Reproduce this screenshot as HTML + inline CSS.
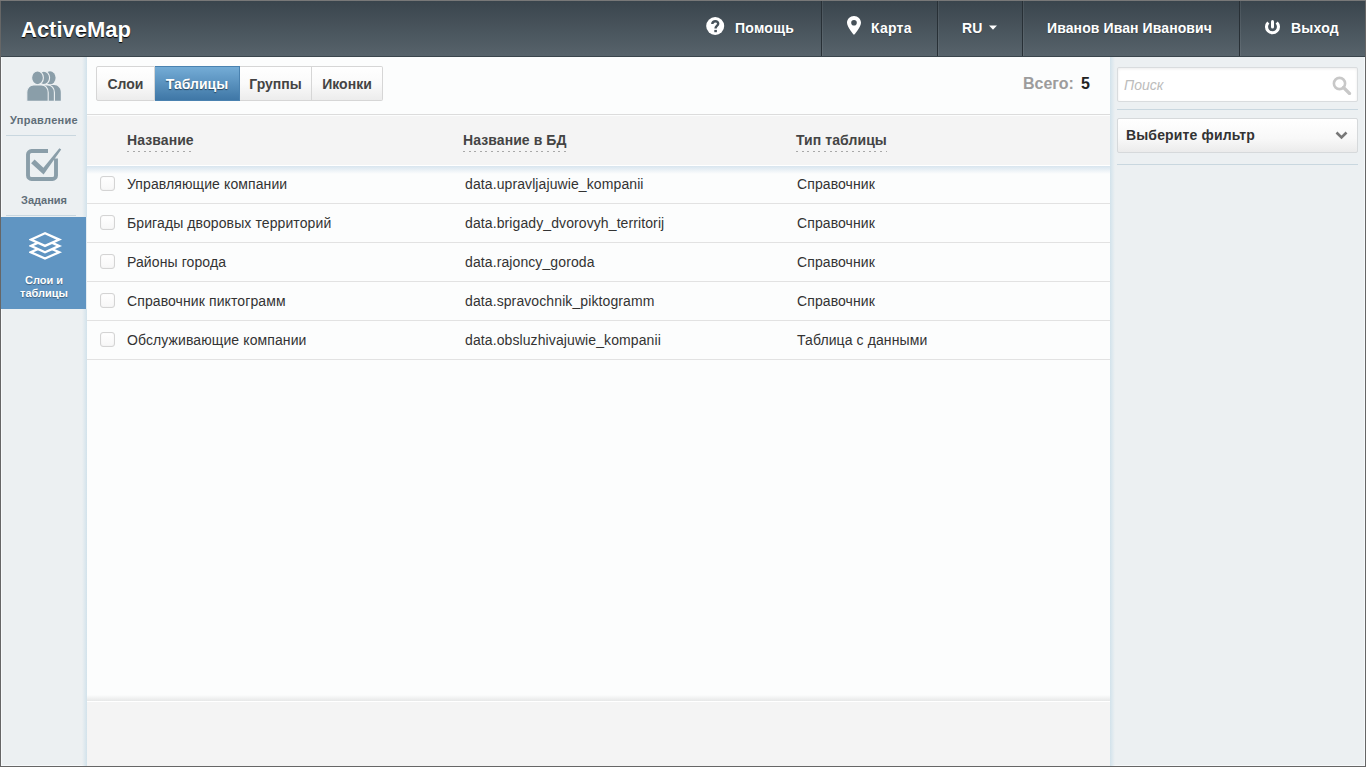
<!DOCTYPE html>
<html><head><meta charset="utf-8">
<style>
*{box-sizing:border-box;margin:0;padding:0}
html,body{width:1366px;height:767px;overflow:hidden;background:#666}
body{font-family:"Liberation Sans",sans-serif;color:#333;position:relative}
.abs{position:absolute}
#top{left:0;top:0;width:1366px;height:1px;background:#787878}
.frame{position:absolute;left:1px;top:1px;width:1364px;height:765px;background:#fcfdfd;overflow:hidden}
.hdr{position:absolute;left:0;top:0;width:1364px;height:56px;background:linear-gradient(#3a454d,#57636b);border-bottom:1px solid #3a454c}
.logo{position:absolute;left:20px;top:16px;font-size:22px;font-weight:bold;color:#fff;text-shadow:0 1px 1px #000;letter-spacing:0}
.nav{position:absolute;top:19px;font-size:14px;font-weight:bold;color:#fff;line-height:16px;text-shadow:0 1px 1px rgba(0,0,0,.25);white-space:nowrap;letter-spacing:0.25px}
.sep{position:absolute;top:0;width:2px;height:55px;background:linear-gradient(90deg,#283036 50%,rgba(255,255,255,.07) 50%)}
.side{position:absolute;left:0;top:56px;width:86px;height:709px;background:#ecf0f2;box-shadow:inset 1px 0 #f6f9fb,inset 0 -1px #f6f9fb}
.side:after{content:"";position:absolute;right:0;top:0;width:5px;height:100%;background:linear-gradient(90deg,rgba(212,227,236,0),#d2e2eb);z-index:0}
.right{position:absolute;left:1109px;top:56px;width:255px;height:709px;background:#ecf0f2;box-shadow:inset -1px 0 #f6f9fb,inset 0 -1px #f6f9fb}
.right:before{content:"";position:absolute;left:0;top:0;width:5px;height:100%;background:linear-gradient(90deg,#d2e2eb,rgba(212,227,236,0))}
.sitem{position:absolute;left:0;width:86px;text-align:center;font-size:11px;font-weight:bold;color:#5f6e78;line-height:13px}
.ssep{position:absolute;left:5px;width:70px;height:1px;background:#c9d7df}
.active{position:absolute;left:0;top:160px;width:85px;height:92px;background:#6095c2;z-index:1;box-shadow:1px 0 0 #e3ecf2}
.side svg,.side .sitem{z-index:2}
.toolbar{position:absolute;left:86px;top:56px;width:1023px;height:58px;border-bottom:1px solid #dcdcdc;background:#fcfdfd}
.tabs{position:absolute;left:9px;top:9px;height:35px}
.tab{position:absolute;top:0;height:35px;border:1px solid #d6d6d6;border-left:none;background:linear-gradient(#fff 0%,#fafafa 50%,#ececec 100%);font-size:14px;font-weight:bold;color:#444;text-align:center;line-height:34px}
.tab.first{border-left:1px solid #d6d6d6;border-radius:2px 0 0 2px}
.tab.last{border-radius:0 2px 2px 0}
.tab.on{background:linear-gradient(#74acd6,#3f77a6);border-color:#4a82b0;color:#fff;text-shadow:0 1px 1px rgba(0,0,0,.5)}
.thead{position:absolute;left:86px;top:115px;width:1023px;height:50px;background:#f4f4f4;border-bottom:1px solid #fff}
.shadow{position:absolute;left:86px;top:165px;width:1023px;height:8px;background:linear-gradient(rgba(180,205,225,.5),rgba(180,205,225,0))}
.th{position:absolute;top:16px;font-size:14px;font-weight:bold;color:#444;line-height:16px;padding-bottom:4px;letter-spacing:0.08px;background:repeating-linear-gradient(90deg,#a8a8a8 0 2px,transparent 2px 5.6px) left bottom/100% 1px no-repeat}
.row{position:absolute;left:86px;width:1023px;height:39px;border-bottom:1px solid #e2e2e2}
.row span{position:absolute;top:11px;font-size:14px;color:#333;line-height:16px;white-space:nowrap;letter-spacing:0.1px}
.cb{position:absolute;left:13px;top:11px;width:15px;height:15px;border:1px solid #d4d4d4;border-radius:3px;background:linear-gradient(#fff,#f7f7f7);box-shadow:inset 0 0 1px #ddd}
.footer{position:absolute;left:86px;top:700px;width:1023px;height:65px;background:#f4f4f4;border-top:1px solid #fff}
.fshadow{position:absolute;left:86px;top:694px;width:1023px;height:6px;background:linear-gradient(rgba(231,232,232,0),#e7e8e8)}
</style></head><body>
<div class="abs" id="top"></div>
<div class="frame">
  <div class="hdr">
    <div class="logo">ActiveMap</div>
    <!-- help -->
    <svg class="abs" style="left:704px;top:16px" width="20" height="20" viewBox="-1.2 0 20 20"><circle cx="9" cy="9" r="9" fill="#fff"/><path d="M6.1 7.1C6.1 5.3 7.4 4.2 9.1 4.2 10.8 4.2 12 5.3 12 6.8 12 8.7 9.4 9 9.4 10.9V11.6" fill="none" stroke="#47525a" stroke-width="2.4"/><rect x="8.1" y="12.9" width="2.6" height="2.3" fill="#47525a"/></svg>
    <div class="nav" style="left:734px">Помощь</div>
    <div class="sep" style="left:820px"></div>
    <svg class="abs" style="left:846px;top:15.4px" width="14" height="19" viewBox="0 0 14 19"><path d="M7 0C3.1 0 0 3 0 6.8 0 11 7 19 7 19s7-8 7-12.2C14 3 10.9 0 7 0zm0 9.6a2.8 2.8 0 1 1 0-5.6 2.8 2.8 0 0 1 0 5.6z" fill="#fff"/></svg>
    <div class="nav" style="left:870px">Карта</div>
    <div class="sep" style="left:936px"></div>
    <div class="nav" style="left:961px">RU</div>
    <svg class="abs" style="left:988px;top:24px" width="8" height="5" viewBox="0 0 8 5"><path d="M0 .6h8L4 4.8z" fill="#fff"/></svg>
    <div class="sep" style="left:1021px"></div>
    <div class="nav" style="left:1046px;letter-spacing:0.1px">Иванов Иван Иванович</div>
    <div class="sep" style="left:1238px"></div>
    <svg class="abs" style="left:1262px;top:17px" width="19" height="18" viewBox="0 0 19 18"><path d="M5.3 4.5A6 6 0 1 0 13.7 4.5" fill="none" stroke="#fff" stroke-width="3.1"/><path d="M9.5 3.4V9.1" stroke="#fff" stroke-width="3" stroke-linecap="round"/></svg>
    <div class="nav" style="left:1290px">Выход</div>
  </div>

  <div class="side">
    <svg class="abs" style="left:25px;top:14px" width="37" height="32" viewBox="0 0 37 32">
      <g fill="#8a9ea9">
        <ellipse cx="24" cy="6.8" rx="5.6" ry="6.5"/>
        <path transform="translate(12.6 0)" d="M0.8 29.8V21.5C0.8 17.2 3.6 14 7.6 14H15.4C19.4 14 22.2 17.2 22.2 21.5V29.8Z"/>
      </g>
      <g fill="#8a9ea9" stroke="#ecf0f2" stroke-width="1.1">
        <ellipse cx="17.8" cy="6.8" rx="5.8" ry="6.7"/>
        <path transform="translate(6.2 0)" d="M0.8 30.4V21.5C0.8 17.2 3.6 14 7.6 14H15.4C19.4 14 22.2 17.2 22.2 21.5V30.4Z"/>
      </g>
      <g fill="#8a9ea9" stroke="#ecf0f2" stroke-width="1.1">
        <ellipse cx="11.5" cy="6.8" rx="5.9" ry="6.9"/>
        <path d="M0.8 30.4V21.5C0.8 17.2 3.6 14 7.6 14H15.4C19.4 14 22.2 17.2 22.2 21.5V30.4Z"/>
      </g>
    </svg>
    <div class="sitem" style="top:57px;letter-spacing:0.3px">Управление</div>
    <div class="ssep" style="top:78px"></div>
    <svg class="abs" style="left:25px;top:91px" width="36" height="36" viewBox="0 0 36 36">
      <path d="M22 3H5.5A3.5 3.5 0 0 0 2 6.5V27.5A3.5 3.5 0 0 0 5.5 31H26.5A3.5 3.5 0 0 0 30 27.5V10.5" fill="none" stroke="#8a9ea9" stroke-width="3.9"/>
      <path d="M5.1 15.2L8.6 11.6 17.4 19.8 33.4 0.3 35.2 1.4 17.6 26.6Z" fill="#8a9ea9"/>
    </svg>
    <div class="sitem" style="top:137px">Задания</div>
    <div class="ssep" style="top:158px"></div>
    <div class="active"></div>
    <svg class="abs" style="left:28px;top:175px" width="34" height="30" viewBox="0 0 34 30">
      <g stroke="#fff" stroke-width="2.3" fill="#6095c2" stroke-linejoin="miter">
        <path d="M16 13.9L1.8 20.2 16 26.5 30.2 20.2z"/>
        <path d="M16 7.6L1.8 13.9 16 20.2 30.2 13.9z"/>
        <path d="M16 1.3L1.8 7.6 16 13.9 30.2 7.6z"/>
      </g>
    </svg>
    <div class="sitem" style="top:217px;color:#fff;text-shadow:0 1px 1px rgba(0,0,0,.35)">Слои и<br>таблицы</div>
  </div>

  <div class="toolbar">
    <div class="tabs">
      <div class="tab first" style="left:0;width:59px">Слои</div>
      <div class="tab on" style="left:59px;width:85px">Таблицы</div>
      <div class="tab" style="left:144px;width:72px">Группы</div>
      <div class="tab last" style="left:216px;width:71px">Иконки</div>
    </div>
    <div class="abs" style="left:936px;top:18px;font-size:16px;font-weight:bold;color:#9c9c9c;line-height:18px">Всего:</div>
    <div class="abs" style="left:994px;top:18px;font-size:16px;font-weight:bold;color:#222;line-height:18px">5</div>
  </div>

  <div class="thead">
    <div class="th" style="left:40px">Название</div>
    <div class="th" style="left:376px">Название в БД</div>
    <div class="th" style="left:709px">Тип таблицы</div>
  </div>
  <div class="shadow"></div>

  <div class="row" style="top:164px"><div class="cb"></div><span style="left:40px">Управляющие компании</span><span style="left:378px">data.upravljajuwie_kompanii</span><span style="left:710px">Справочник</span></div>
  <div class="row" style="top:203px"><div class="cb"></div><span style="left:40px">Бригады дворовых территорий</span><span style="left:378px">data.brigady_dvorovyh_territorij</span><span style="left:710px">Справочник</span></div>
  <div class="row" style="top:242px"><div class="cb"></div><span style="left:40px">Районы города</span><span style="left:378px">data.rajoncy_goroda</span><span style="left:710px">Справочник</span></div>
  <div class="row" style="top:281px"><div class="cb"></div><span style="left:40px">Справочник пиктограмм</span><span style="left:378px">data.spravochnik_piktogramm</span><span style="left:710px">Справочник</span></div>
  <div class="row" style="top:320px"><div class="cb"></div><span style="left:40px">Обслуживающие компании</span><span style="left:378px">data.obsluzhivajuwie_kompanii</span><span style="left:710px">Таблица с данными</span></div>

  <div class="fshadow"></div>
  <div class="footer"></div>

  <div class="right">
    <div class="abs" style="left:7px;top:10px;width:241px;height:35px;border:1px solid #d9dcde;border-radius:2px;background:#fff;box-shadow:inset 0 1px 3px rgba(0,0,0,.08)"></div>
    <div class="abs" style="left:14px;top:20px;font-size:14px;font-style:italic;color:#bcbcbc;line-height:16px">Поиск</div>
    <svg class="abs" style="left:222.4px;top:18.6px" width="20" height="19" viewBox="0 0 20 19"><circle cx="7.5" cy="7.5" r="5.6" fill="none" stroke="#c8c8c8" stroke-width="2.6"/><path d="M11.5 11.5l6 6" stroke="#c8c8c8" stroke-width="3.2" stroke-linecap="round"/></svg>
    <div class="abs" style="left:7px;top:52px;width:241px;height:1px;background:#c9d7df"></div>
    <div class="abs" style="left:7px;top:61px;width:241px;height:35px;border:1px solid #d6d9db;border-radius:2px;background:linear-gradient(#fff 0%,#f8f8f8 60%,#ebebeb 100%);font-size:14px;font-weight:bold;color:#333;line-height:33px;padding-left:8px;letter-spacing:0.15px">Выберите фильтр</div>
    <svg class="abs" style="left:225px;top:74px" width="13" height="9" viewBox="0 0 13 9"><path d="M1.5 1.5l5 5 5-5" fill="none" stroke="#777" stroke-width="2.6"/></svg>
    <div class="abs" style="left:7px;top:107px;width:241px;height:1px;background:#c9d7df"></div>
  </div>
</div>
</body></html>
